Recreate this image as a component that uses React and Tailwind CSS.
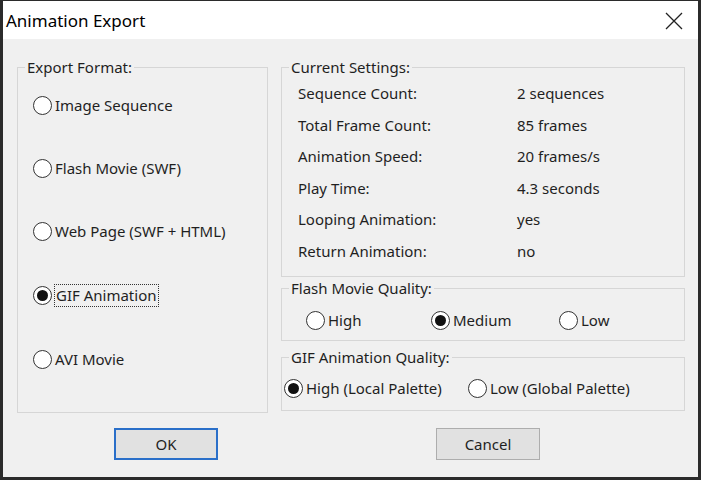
const FONT = { fontFamily: '"Noto Sans", "Liberation Sans", sans-serif' }

function Radio({ checked, label, focus }) {
  return (
    <div className="flex items-center">
      <span className="flex h-[19px] w-[19px] shrink-0 items-center justify-center rounded-full border-[1.5px] border-[#333] bg-white">
        {checked && <span className="h-[11px] w-[11px] rounded-full bg-[#111]" />}
      </span>
      <span
        className={
          focus
            ? 'ml-[2px] border border-dotted border-[#333] px-[1px] leading-[21px]'
            : 'ml-[3px] leading-[21px]'
        }
      >
        {label}
      </span>
    </div>
  )
}

function Group({ title, className, children }) {
  return (
    <fieldset className={`border border-[#d6d6d6] ${className}`}>
      <legend className="ml-[7px] px-[2px] leading-[16px]">{title}</legend>
      {children}
    </fieldset>
  )
}

const SETTINGS = [
  ['Sequence Count:', '2 sequences'],
  ['Total Frame Count:', '85 frames'],
  ['Animation Speed:', '20 frames/s'],
  ['Play Time:', '4.3 seconds'],
  ['Looping Animation:', 'yes'],
  ['Return Animation:', 'no'],
]

export default function App() {
  return (
    <div
      className="flex h-[480px] w-[701px] flex-col border-x-[3px] border-b-[3px] border-t border-[#2b2b2b] bg-[#f0f0f0] text-[15px] text-[#1f1f1f]"
      style={FONT}
    >
      <div className="flex h-[38px] shrink-0 items-center justify-between bg-white pl-[3px] pr-[15px]">
        <span className="mt-[2px] text-[17px] text-black">Animation Export</span>
        <svg width="18" height="18" viewBox="0 0 18 18" className="mt-[2px]">
          <path d="M1 1 L17 17 M17 1 L1 17" stroke="#222" strokeWidth="1.3" fill="none" />
        </svg>
      </div>

      <div className="flex pl-[14px] pt-[20px]">
        <Group title="Export Format:" className="h-[354px] w-[251px]">
          <div className="flex flex-col gap-[42px] pl-[15px] pt-[20px]">
            <Radio label="Image Sequence" />
            <Radio label="Flash Movie (SWF)" />
            <Radio label="Web Page (SWF + HTML)" />
            <Radio label="GIF Animation" checked focus />
            <Radio label="AVI Movie" />
          </div>
        </Group>

        <div className="ml-[13px] flex w-[404px] flex-col">
          <Group title="Current Settings:" className="h-[218px]">
            <div className="flex flex-col gap-[10.5px] pl-[16px] pt-[8px]">
              {SETTINGS.map(([k, v]) => (
                <div key={k} className="flex leading-[21px]">
                  <span className="w-[219px]">{k}</span>
                  <span>{v}</span>
                </div>
              ))}
            </div>
          </Group>

          <Group title="Flash Movie Quality:" className="mt-[3px] h-[61px]">
            <div className="flex pl-[24px] pt-[14px]">
              <div className="w-[125px]">
                <Radio label="High" />
              </div>
              <div className="w-[128px]">
                <Radio label="Medium" checked />
              </div>
              <Radio label="Low" />
            </div>
          </Group>

          <Group title="GIF Animation Quality:" className="mt-[8px] h-[62px]">
            <div className="flex pl-[2px] pt-[13px]">
              <div className="w-[184px]">
                <Radio label="High (Local Palette)" checked />
              </div>
              <Radio label="Low (Global Palette)" />
            </div>
          </Group>
        </div>
      </div>

      <div className="flex pt-[15px]">
        <button className="ml-[111px] h-[32px] w-[104px] border-2 border-[#2a6fc9] bg-[#e1e1e1] text-[15px]">
          OK
        </button>
        <button className="ml-[218px] h-[32px] w-[104px] border border-[#adadad] bg-[#e1e1e1] text-[15px]">
          Cancel
        </button>
      </div>
    </div>
  )
}
